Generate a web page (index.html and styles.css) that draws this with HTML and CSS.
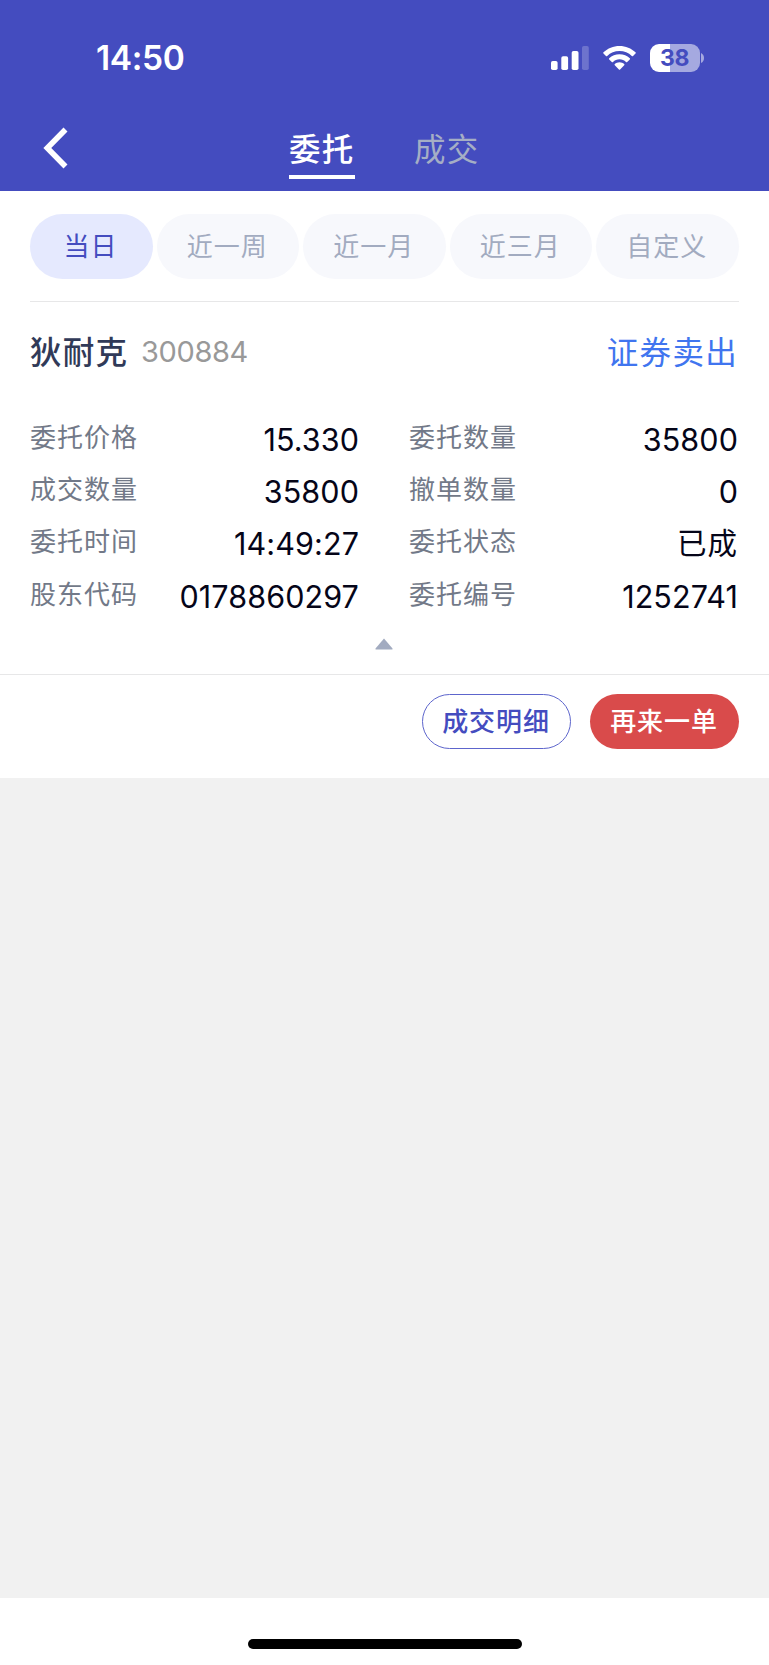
FILE: index.html
```html
<!DOCTYPE html>
<html lang="zh-CN">
<head>
    <meta charset="UTF-8">
    <meta name="viewport" content="width=device-width, initial-scale=1.0">
    <title>委托</title>
    <link rel="stylesheet" href="styles.css">
</head>
<body>
    <header class="header">
        <!-- Status bar -->
        <div class="status-bar">
            <span class="time">14:50</span>
            <div class="status-icons">
                <svg class="signal" width="38" height="24" viewBox="0 0 38 24" fill="#fff">
                    <rect x="0" y="15" width="6.6" height="9" rx="1.8"/>
                    <rect x="10.3" y="10.3" width="6.8" height="13.7" rx="1.8"/>
                    <rect x="20.7" y="5" width="6.8" height="19" rx="1.8"/>
                    <rect x="31" y="0" width="6.8" height="24" rx="1.8" opacity="0.22"/>
                </svg>
                <svg class="wifi" width="33" height="24" viewBox="0 0 33 24" fill="#fff">
                    <path d="M16.5 0C22.7 0 28.3 2.4 32.5 6.3Q33.1 6.9 32.5 7.5L30 10Q29.4 10.5 28.8 10C25.6 7 21.3 5.1 16.5 5.1S7.4 7 4.2 10Q3.6 10.5 3 10L0.5 7.5Q-0.1 6.9 0.5 6.3C4.7 2.4 10.3 0 16.5 0Z"/>
                    <path d="M16.5 8.2C20.5 8.2 24.1 9.7 26.8 12.2Q27.4 12.8 26.8 13.4L24.2 15.9Q23.6 16.4 23 15.9C21.3 14.3 19 13.3 16.5 13.3S11.7 14.3 10 15.9Q9.4 16.4 8.8 15.9L6.2 13.4Q5.6 12.8 6.2 12.2C8.9 9.7 12.5 8.2 16.5 8.2Z"/>
                    <path d="M16.5 16.3C18.3 16.3 20 17 21.2 18.1Q21.8 18.7 21.2 19.3L17.1 23.4Q16.5 24 15.9 23.4L11.8 19.3Q11.2 18.7 11.8 18.1C13 17 14.7 16.3 16.5 16.3Z"/>
                </svg>
                <div class="battery">
                    <span class="battery-level">38</span>
                    <svg class="battery-cap" width="3" height="10" viewBox="0 0 3 10">
                        <path d="M0 0Q3 1.5 3 5T0 10Z" fill="#fff" opacity="0.52"/>
                    </svg>
                </div>
            </div>
        </div>

        <!-- Navigation -->
        <nav class="nav">
            <svg class="back" width="25" height="42" viewBox="0 0 25 42">
                <path d="M22.5 2.5L4.3 21L22.5 39.5" fill="none" stroke="#fff" stroke-width="5.6"/>
            </svg>
            <a class="tab active">委托</a>
            <a class="tab">成交</a>
        </nav>
    </header>

    <main class="orders">
        <div class="filters">
            <button class="filter selected">当日</button>
            <button class="filter">近一周</button>
            <button class="filter">近一月</button>
            <button class="filter">近三月</button>
            <button class="filter">自定义</button>
        </div>

        <section class="order">
            <div class="stock">
                <span class="stock-name">狄耐克</span>
                <span class="stock-code">300884</span>
                <span class="side">证券卖出</span>
            </div>
            <div class="details">
                <div class="item"><span class="label">委托价格</span><span class="value">15.330</span></div>
                <div class="item"><span class="label">委托数量</span><span class="value">35800</span></div>
                <div class="item"><span class="label">成交数量</span><span class="value">35800</span></div>
                <div class="item"><span class="label">撤单数量</span><span class="value">0</span></div>
                <div class="item"><span class="label">委托时间</span><span class="value">14:49:27</span></div>
                <div class="item"><span class="label">委托状态</span><span class="value cjk">已成</span></div>
                <div class="item"><span class="label">股东代码</span><span class="value">0178860297</span></div>
                <div class="item"><span class="label">委托编号</span><span class="value">1252741</span></div>
            </div>
            <svg class="collapse" width="18" height="12" viewBox="0 0 18 12">
                <path d="M9 0.5L17.5 10.4Q18 11.5 17 11.5H1Q0 11.5 0.5 10.4Z" fill="#a2abc0"/>
            </svg>
        </section>

        <div class="actions">
            <button class="btn btn-outline">成交明细</button>
            <button class="btn btn-red">再来一单</button>
        </div>
    </main>

    <footer class="home-area">
        <div class="home-bar"></div>
    </footer>
</body>
</html>
```

FILE: styles.css
```css
* {
    margin: 0;
    padding: 0;
    box-sizing: border-box;
}

body {
    display: flex;
    flex-direction: column;
    height: 1665px;
    background: #f1f1f1;
    font-family: Inter, "Noto Sans CJK SC", sans-serif;
    overflow: hidden;
}

button {
    border: none;
    font-family: inherit;
    white-space: nowrap;
}

svg {
    display: block;
}

.header {
    height: 191px;
    background: #444cbf;
    color: #fff;
}

.status-bar {
    display: flex;
    justify-content: space-between;
    align-items: center;
    height: 115px;
    padding: 0 65px 0 96px;
}

.time {
    font-size: 33.5px;
    font-weight: 600;
    letter-spacing: -0.4px;
}

.status-icons {
    display: flex;
    align-items: center;
}

.signal {
    margin-right: 14px;
}

.wifi {
    margin-right: 14px;
}

.battery {
    display: flex;
    align-items: center;
    gap: 1px;
}

.battery-level {
    width: 50px;
    height: 28px;
    padding-right: 1px;
    border-radius: 9px;
    background: linear-gradient(to right, #fff 40%, #a5a9e0 40%);
    color: #444cbf;
    font-size: 23px;
    font-weight: 700;
    letter-spacing: -0.4px;
    line-height: 28px;
    text-align: center;
}

.nav {
    display: flex;
    height: 76px;
    padding-left: 43px;
}

.back {
    margin: 12px 221px 0 0;
}

.tab {
    width: 66px;
    height: 64px;
    margin-right: 59px;
    color: #a5aec5;
    font-size: 31.5px;
    letter-spacing: 1.2px;
    line-height: 70px;
    white-space: nowrap;
}

.tab.active {
    border-bottom: 4px solid #fff;
    color: #fff;
    font-weight: 500;
}

.orders {
    height: 587px;
    background: #fff;
}

.filters {
    display: flex;
    gap: 4px;
    height: 111px;
    margin: 0 30px;
    padding-top: 23px;
    border-bottom: 1px solid #e7e7e8;
}

.filter {
    flex: 143;
    height: 65px;
    padding: 1px 2px 0 0;
    border-radius: 33px;
    background: #f7f8fc;
    color: #a2abc0;
    font-size: 26px;
    letter-spacing: 1px;
    line-height: 64px;
}

.filter.selected {
    flex: 123;
    background: #e5e9fe;
    color: #444cbf;
}

.order {
    height: 373px;
    padding: 27px 30px 0;
    border-bottom: 1px solid #e7e7e8;
}

.stock {
    display: flex;
    align-items: center;
    height: 48px;
    line-height: 48px;
}

.stock-name {
    color: #313a58;
    font-size: 31.5px;
    font-weight: 500;
    letter-spacing: 1.2px;
}

.stock-code {
    margin-left: 13px;
    padding-bottom: 2px;
    color: #999;
    font-size: 29px;
    letter-spacing: -0.4px;
}

.side {
    margin-left: auto;
    padding-right: 1px;
    color: #4075ef;
    font-size: 31.5px;
    letter-spacing: 1.3px;
}

.details {
    display: grid;
    grid-template-columns: 330px 330px;
    column-gap: 49px;
    grid-auto-rows: 52.2px;
    margin-top: 35px;
}

.item {
    display: flex;
    justify-content: space-between;
    line-height: 52px;
}

.label {
    color: #727988;
    font-size: 26px;
    letter-spacing: 1px;
}

.value {
    padding-top: 2px;
    padding-right: 1px;
    color: #050518;
    font-size: 30.5px;
    letter-spacing: 0.1px;
}

.value.cjk {
    padding-top: 1px;
    font-size: 29.5px;
    letter-spacing: 1px;
}

.collapse {
    margin: 17px 0 0 345px;
}

.actions {
    display: flex;
    justify-content: flex-end;
    gap: 19px;
    padding: 19px 30px 0;
}

.btn {
    width: 149px;
    height: 55px;
    padding-right: 1px;
    border-radius: 28px;
    font-size: 26px;
    font-weight: 500;
    letter-spacing: 0.9px;
    line-height: 54px;
}

.btn-outline {
    border: 1px solid #5d65cc;
    background: #fff;
    color: #444cbf;
}

.btn-red {
    background: #d94b4b;
    color: #fff;
}

.home-area {
    height: 67px;
    margin-top: auto;
    padding-top: 41px;
    background: #fff;
}

.home-bar {
    width: 274px;
    height: 10px;
    margin: 0 auto;
    border-radius: 5px;
    background: #000;
}
```
